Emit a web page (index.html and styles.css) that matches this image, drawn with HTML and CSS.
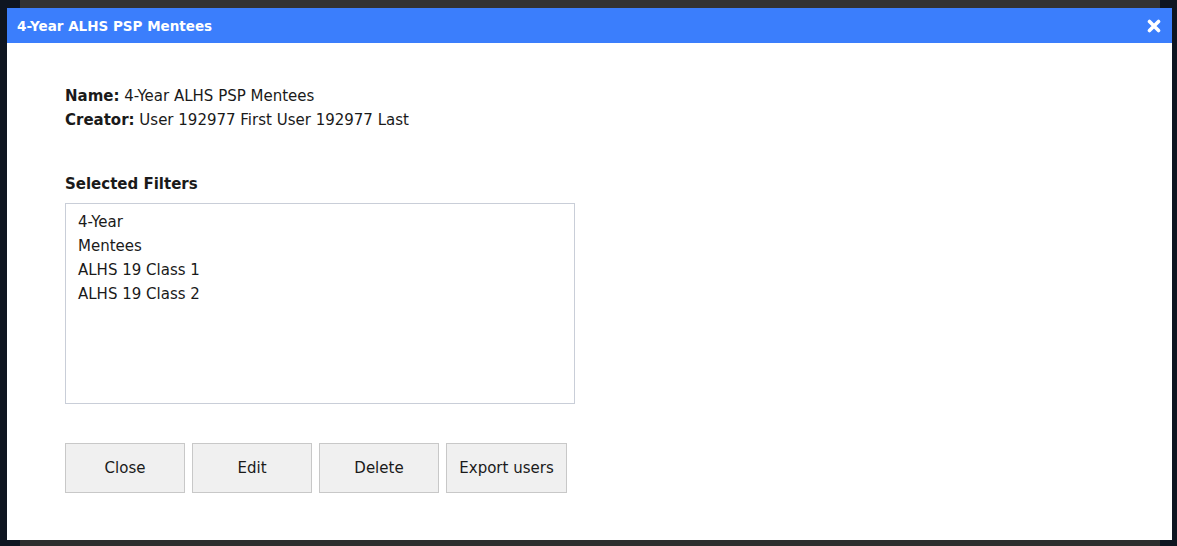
FILE: index.html
```html
<!DOCTYPE html>
<html>
<head>
<meta charset="utf-8">
<link rel="stylesheet" href="styles.css">
</head>
<body>
<div class="backdrop">
  <div class="dialog">
    <div class="titlebar">
      <span class="title">4-Year ALHS PSP Mentees</span>
      <svg class="close-icon" width="14" height="14" viewBox="0 0 14 14"><path d="M2.5 2.5 L11.5 11.5 M11.5 2.5 L2.5 11.5" stroke="#fff" stroke-width="3.6" stroke-linecap="round"/></svg>
    </div>
    <div class="content">
      <div class="info">
        <div><b>Name:</b> 4-Year ALHS PSP Mentees</div>
        <div><b>Creator:</b> User 192977 First User 192977 Last</div>
      </div>
      <div class="section-title">Selected Filters</div>
      <div class="filters">
        <div>4-Year</div>
        <div>Mentees</div>
        <div>ALHS 19 Class 1</div>
        <div>ALHS 19 Class 2</div>
      </div>
      <div class="buttons">
        <button class="btn">Close</button>
        <button class="btn">Edit</button>
        <button class="btn">Delete</button>
        <button class="btn btn-wide">Export users</button>
      </div>
    </div>
  </div>
</div>
</body>
</html>
```
FILE: styles.css
```css
html, body {
  margin: 0;
  padding: 0;
  height: 100%;
  background: #0e1520;
}
.backdrop {
  height: 546px;
  padding: 8px 5px 6px 7px;
  box-sizing: border-box;
  background:
    linear-gradient(to bottom, #333 0, #333 8px, transparent 8px, transparent 540px, #2e2e2e 540px) 20px 0 / 1140px 100% no-repeat,
    #0e1520;
}
.dialog {
  background: #fff;
  height: 100%;
  display: flex;
  flex-direction: column;
  font-family: "DejaVu Sans", Verdana, sans-serif;
  font-size: 15px;
  color: #1a1a1a;
}
.titlebar {
  height: 35px;
  background: #3b7efc;
  display: flex;
  align-items: center;
  justify-content: space-between;
  padding: 0 11px 0 10px;
}
.title {
  color: #fff;
  font-size: 13.5px;
  font-weight: bold;
}
.close-icon {
  display: block;
}
.content {
  padding: 41px 58px 0 58px;
}
.info {
  line-height: 24px;
}
.section-title {
  font-weight: bold;
  margin-top: 40px;
  line-height: 24px;
}
.filters {
  margin-top: 7px;
  width: 510px;
  height: 201px;
  border: 1px solid #c9ced8;
  padding: 6px 12px;
  box-sizing: border-box;
  line-height: 24px;
}
.buttons {
  display: flex;
  gap: 7px;
  margin-top: 39px;
}
.btn {
  width: 120px;
  height: 50px;
  background: #f0f0f0;
  border: 1px solid #c8c8c8;
  font-family: "DejaVu Sans", Verdana, sans-serif;
  font-size: 15px;
  color: #1a1a1a;
  padding: 0;
}
.btn-wide {
  width: 121px;
}
```
